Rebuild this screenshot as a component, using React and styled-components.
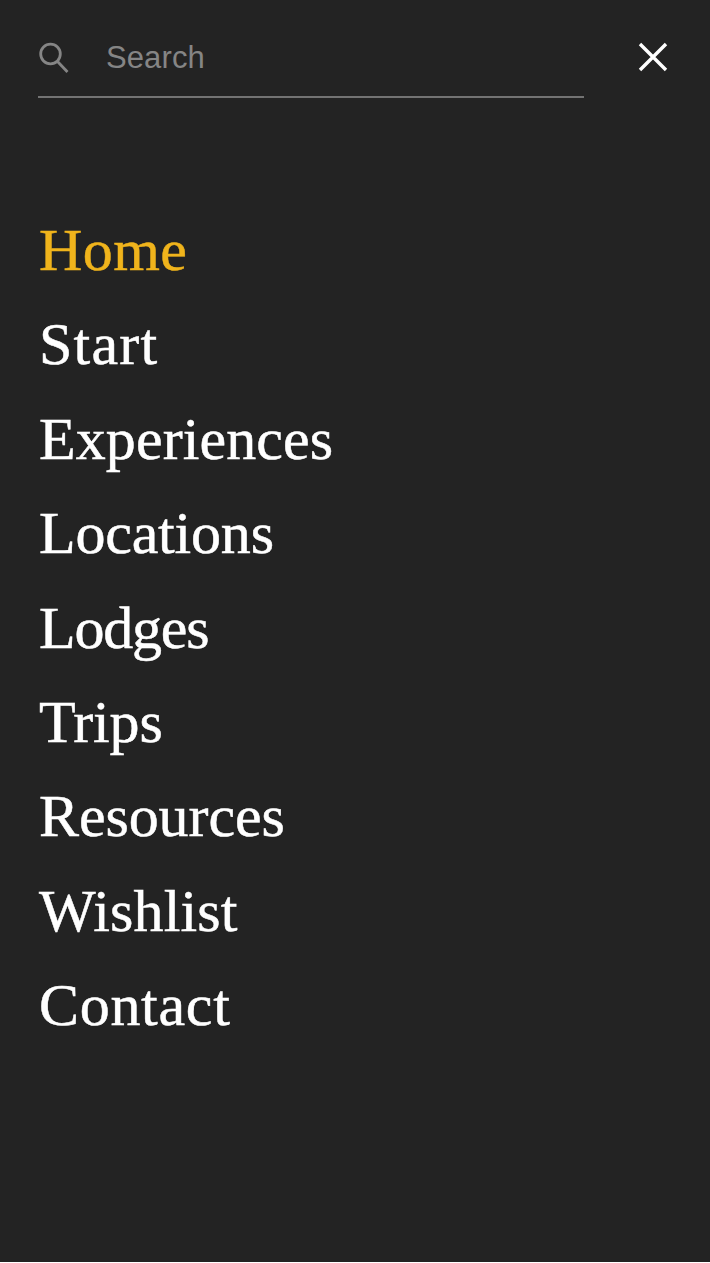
import React from 'react';
import styled, { createGlobalStyle } from 'styled-components';

const GlobalStyle = createGlobalStyle`
  html, body {
    margin: 0;
    padding: 0;
    background: #fff;
  }
`;

const Menu = styled.div`
  width: 710px;
  height: 1262px;
  background: #232323;
  padding: 0 42px 0 38px;
  box-sizing: border-box;
`;

const TopBar = styled.div`
  display: flex;
  justify-content: space-between;
  align-items: flex-start;
  padding-top: 38px;
`;

const SearchBox = styled.div`
  width: 546px;
  height: 60px;
  display: flex;
  align-items: center;
  gap: 37px;
  box-sizing: border-box;
  padding-bottom: 19px;
  border-bottom: 2px solid #737373;
`;

const SearchLabel = styled.span`
  font-family: "Liberation Sans", Arial, sans-serif;
  font-size: 31px;
  letter-spacing: 0.1px;
  color: #858585;
`;

const CloseButton = styled.button`
  background: none;
  border: 0;
  padding: 0;
  width: 30px;
  height: 30px;
  margin-top: 4px;
  color: #fff;
`;

const NavList = styled.nav`
  display: flex;
  flex-direction: column;
  padding: 105px 0 0 1px;
`;

const NavItem = styled.a`
  font-family: "Liberation Serif", "Times New Roman", serif;
  font-size: 60px;
  line-height: 94.4px;
  height: 94.4px;
  letter-spacing: ${(p) => p.$tracking}px;
  -webkit-text-stroke: 0.5px currentColor;
  color: ${(p) => (p.$active ? '#f0b41c' : '#fff')};
`;

const items = [
  { label: 'Home', tracking: 0.4 },
  { label: 'Start', tracking: 1.2 },
  { label: 'Experiences', tracking: 0.1 },
  { label: 'Locations', tracking: -0.2 },
  { label: 'Lodges', tracking: -1.2 },
  { label: 'Trips', tracking: -0.2 },
  { label: 'Resources', tracking: -0.1 },
  { label: 'Wishlist', tracking: 0.1 },
  { label: 'Contact', tracking: 0.7 },
];

export default function App() {
  return (
    <>
      <GlobalStyle />
      <Menu>
        <TopBar>
          <SearchBox>
            <svg width="31" height="31" viewBox="0 0 31 31" fill="none" stroke="#858585" strokeWidth="2.8">
              <circle cx="12.5" cy="12" r="9.8" />
              <path d="M19.5 19.5l10 10.5" />
            </svg>
            <SearchLabel>Search</SearchLabel>
          </SearchBox>
          <CloseButton>
            <svg width="30" height="30" viewBox="0 0 30 30" fill="none" stroke="currentColor" strokeWidth="3.4">
              <path d="M2 2l26 26M28 2L2 28" />
            </svg>
          </CloseButton>
        </TopBar>
        <NavList>
          {items.map((item, i) => (
            <NavItem key={item.label} $active={i === 0} $tracking={item.tracking}>{item.label}</NavItem>
          ))}
        </NavList>
      </Menu>
    </>
  );
}
